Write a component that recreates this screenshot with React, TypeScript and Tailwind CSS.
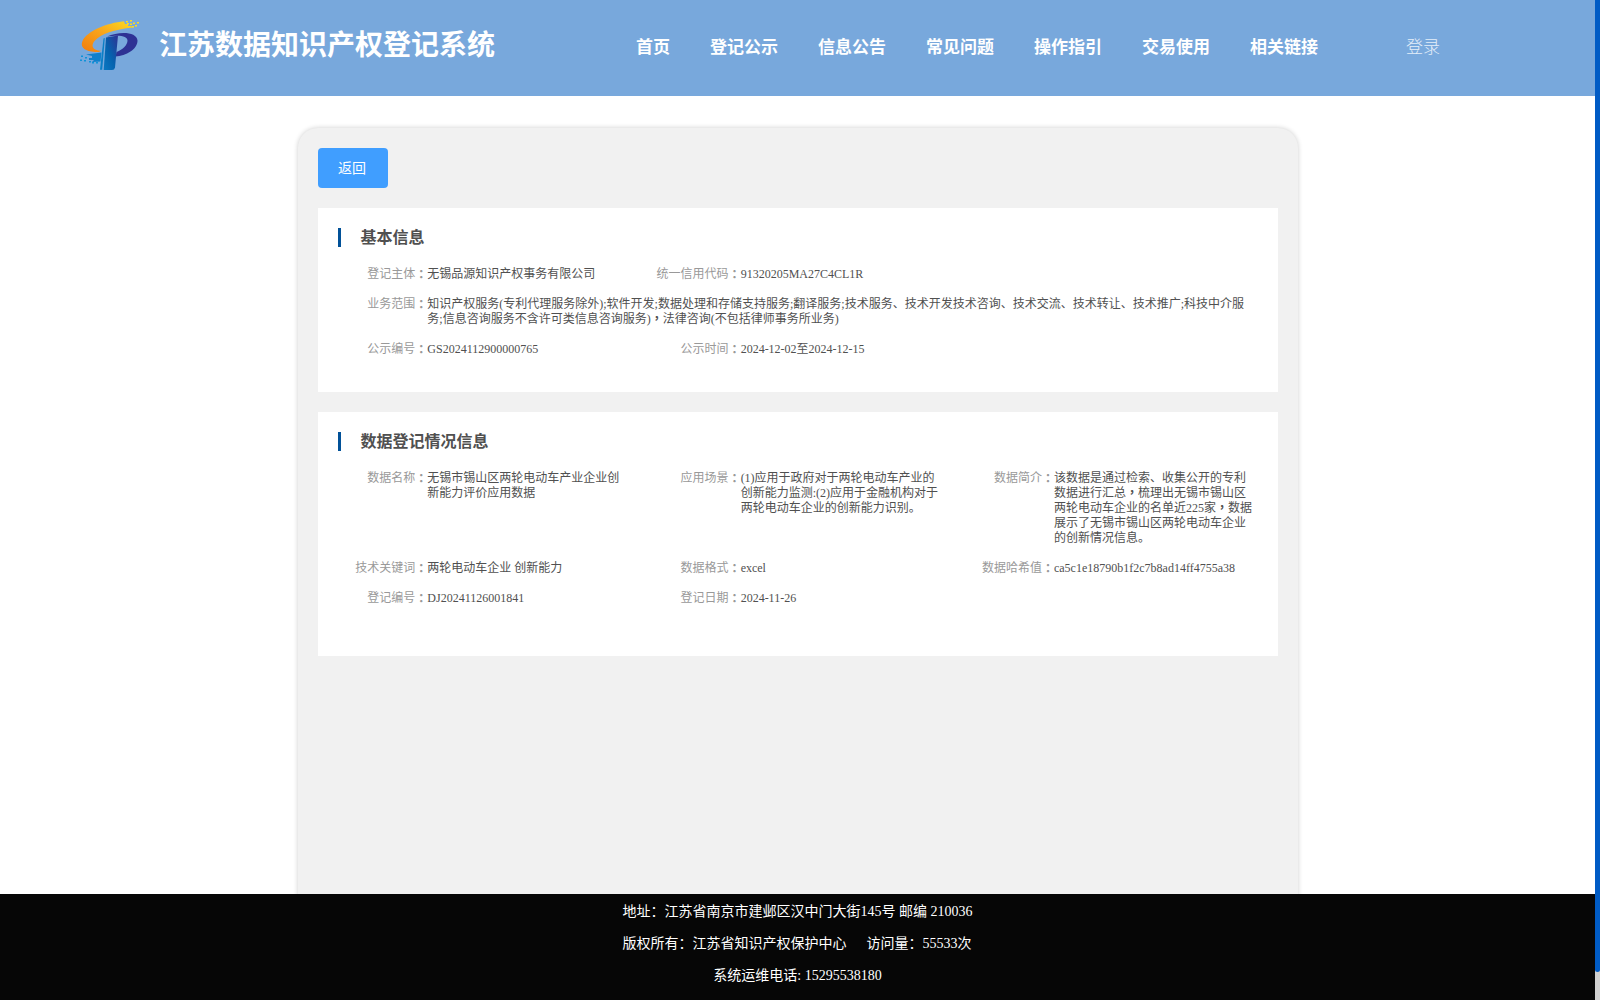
import React from "react";

type Field = { label: string; lines: string[]; span?: string };

const NAV = ["首页", "登记公示", "信息公告", "常见问题", "操作指引", "交易使用", "相关链接"];

const BASIC: Field[] = [
  { label: "登记主体", lines: ["无锡品源知识产权事务有限公司"] },
  { label: "统一信用代码", lines: ["91320205MA27C4CL1R"], span: "col-span-2" },
  {
    label: "业务范围",
    lines: [
      "知识产权服务(专利代理服务除外);软件开发;数据处理和存储支持服务;翻译服务;技术服务、技术开发技术咨询、技术交流、技术转让、技术推广;科技中介服",
      "务;信息咨询服务不含许可类信息咨询服务)，法律咨询(不包括律师事务所业务)",
    ],
    span: "col-span-3",
  },
  { label: "公示编号", lines: ["GS2024112900000765"] },
  { label: "公示时间", lines: ["2024-12-02至2024-12-15"] },
];

const DATA: Field[] = [
  { label: "数据名称", lines: ["无锡市锡山区两轮电动车产业企业创", "新能力评价应用数据"] },
  {
    label: "应用场景",
    lines: ["(1)应用于政府对于两轮电动车产业的", "创新能力监测:(2)应用于金融机构对于", "两轮电动车企业的创新能力识别。"],
  },
  {
    label: "数据简介",
    lines: [
      "该数据是通过检索、收集公开的专利",
      "数据进行汇总，梳理出无锡市锡山区",
      "两轮电动车企业的名单近225家，数据",
      "展示了无锡市锡山区两轮电动车企业",
      "的创新情况信息。",
    ],
  },
  { label: "技术关键词", lines: ["两轮电动车企业 创新能力"] },
  { label: "数据格式", lines: ["excel"] },
  { label: "数据哈希值", lines: ["ca5c1e18790b1f2c7b8ad14ff4755a38"] },
  { label: "登记编号", lines: ["DJ20241126001841"] },
  { label: "登记日期", lines: ["2024-11-26"] },
];

function Logo() {
  return (
    <svg className="mt-[2px] h-[52px] w-[60px] shrink-0" viewBox="0 0 60 52">
      <defs>
        <linearGradient id="gold" x1="0" y1="1" x2="1" y2="0">
          <stop offset="0" stopColor="#f07c0c" />
          <stop offset="0.5" stopColor="#f9a31b" />
          <stop offset="1" stopColor="#fbdc20" />
        </linearGradient>
        <linearGradient id="stem" x1="0" y1="1" x2="1" y2="0">
          <stop offset="0" stopColor="#0a78c2" />
          <stop offset="0.45" stopColor="#0562ae" />
          <stop offset="1" stopColor="#2e3294" />
        </linearGradient>
      </defs>
      <path
        d="M44 1.300C27 3 7 11 2.500 21C-.5 28 6 32 19 32L21 30.700C13 30.500 10 26 15 20.500C21 14 34 9.500 53 7.500L51 6H48V4H45Z"
        fill="url(#gold)"
      />
      <path d="M27 16.500C39 11 57 11.500 57.500 20.500C57.800 29 46 36 35.500 36.500L36.500 32C43 29.500 47.500 25 47.500 20.500C47.500 16 40 14.500 27 16.500Z" fill="#2e3294" />
      <path d="M26 17.500L38 15.500L35 47.500Q34.500 50 32 50H23.700Z" fill="url(#stem)" />
      <path d="M23.500 18.500L20 49.800H22.200L24.800 18Z" fill="#0b7fc6" />
      <path d="M6 34.500L21.500 32.500L20.500 41.500L12 42L14 40H9V38H12V36Z" fill="#0f80cc" />
      <path d="M46 1h2v1.500h-2zM50 0h2v1.500h-2zM53 2.500h2v1.500h-2zM57 2h2v1.500h-2zM50 3.500h2v1.500h-2zM55 5h2v1.500h-2zM52 6h2v1.500h-2zM47 3h2v1.500h-2z" fill="#fbdc20" />
      <path d="M1 35.500h2v1.500h-2zM5 37h2v1.500h-2zM0 39.500h2v1.500h-2zM4 40h2v1.500h-2zM9 41h2v1.500h-2zM12 42h2v1.500h-2zM16 42h2v1.500h-2z" fill="#0f93d8" />
    </svg>
  );
}

/* Full-width commas are set in the centred Traditional Chinese form. */
function Line({ text }: { text: string }) {
  const parts = text.split("，");
  return (
    <div className="h-[15px]">
      {parts.map((p, i) => (
        <React.Fragment key={i}>
          {i > 0 && (
            <span lang="zh-TW" className="font-['Liberation_Serif','Noto_Sans_CJK_TC',sans-serif] font-bold">
              ，
            </span>
          )}
          {p}
        </React.Fragment>
      ))}
    </div>
  );
}

function Item({ label, lines, span = "" }: Field) {
  return (
    <div className={"flex pb-[15px] " + span}>
      <div className="flex h-[15px] w-[89.3px] shrink-0 justify-end whitespace-nowrap text-[#999999]">
        <span>{label}</span>
        <span lang="zh-TW" className="-mt-px font-['Noto_Sans_CJK_TC',sans-serif] font-bold">
          ：
        </span>
      </div>
      <div className="whitespace-nowrap text-[#505050]">
        {lines.map((l) => (
          <Line key={l} text={l} />
        ))}
      </div>
    </div>
  );
}

function Panel({ title, fields, className }: { title: string; fields: Field[]; className: string }) {
  return (
    <section className={"mt-5 bg-white pl-5 pt-5 " + className}>
      <h2 className="flex h-[19px] items-center border-l-[3px] border-[#015198] pl-[19.5px] text-base font-bold text-[#505050]">
        {title}
      </h2>
      <div className="mt-5 grid grid-cols-3 text-xs leading-[15px]">
        {fields.map((f) => (
          <Item key={f.label} {...f} />
        ))}
      </div>
    </section>
  );
}

export default function App() {
  return (
    <div className="flex h-[1000px] w-[1600px] overflow-hidden bg-white font-['Liberation_Serif','Noto_Sans_CJK_SC',serif]">
      <div className="flex w-[1595px] shrink-0 flex-col">
        <header className="flex h-24 shrink-0 bg-[#78a8dc] pl-20 text-white">
          <div className="flex h-[90px] w-[556px] items-center">
            <Logo />
            <h1 className="ml-[19px] mt-[2px] whitespace-nowrap text-[28px] font-bold leading-none">江苏数据知识产权登记系统</h1>
          </div>
          <nav className="flex h-[95px] items-center gap-10 whitespace-nowrap text-[17px] font-bold">
            {NAV.map((n) => (
              <a key={n}>{n}</a>
            ))}
          </nav>
          <a className="ml-[88px] flex h-[95px] items-center text-[17px] font-light text-[#e4eef9]">登录</a>
        </header>

        <main className="min-h-0 flex-1 overflow-hidden pt-8">
          <div className="ml-[298px] h-[900px] w-[1000px] rounded-[20px] bg-[#f1f1f1] p-5 shadow-[0_0_5px_rgba(0,0,0,0.2)]">
            <button className="flex h-10 w-[70px] items-center rounded bg-[#409eff] pl-5 pt-px text-sm text-white">返回</button>
            <Panel title="基本信息" fields={BASIC} className="h-[184px]" />
            <Panel title="数据登记情况信息" fields={DATA} className="h-[244px]" />
          </div>
        </main>

        <footer className="flex h-[106px] shrink-0 flex-col items-center whitespace-pre bg-[#060606] pt-[2px] text-sm leading-8 text-white">
          <p>地址：江苏省南京市建邺区汉中门大街145号 邮编 210036</p>
          <p className="flex gap-5 pr-px">
            <span>版权所有：江苏省知识产权保护中心</span>
            <span>访问量：55533次</span>
          </p>
          <p>系统运维电话: 15295538180</p>
        </footer>
      </div>
      <div className="w-[5px] bg-[#d0d0d0]">
        <div className="h-[972px] rounded-b-[3px] bg-[#005bc5]" />
      </div>
    </div>
  );
}
